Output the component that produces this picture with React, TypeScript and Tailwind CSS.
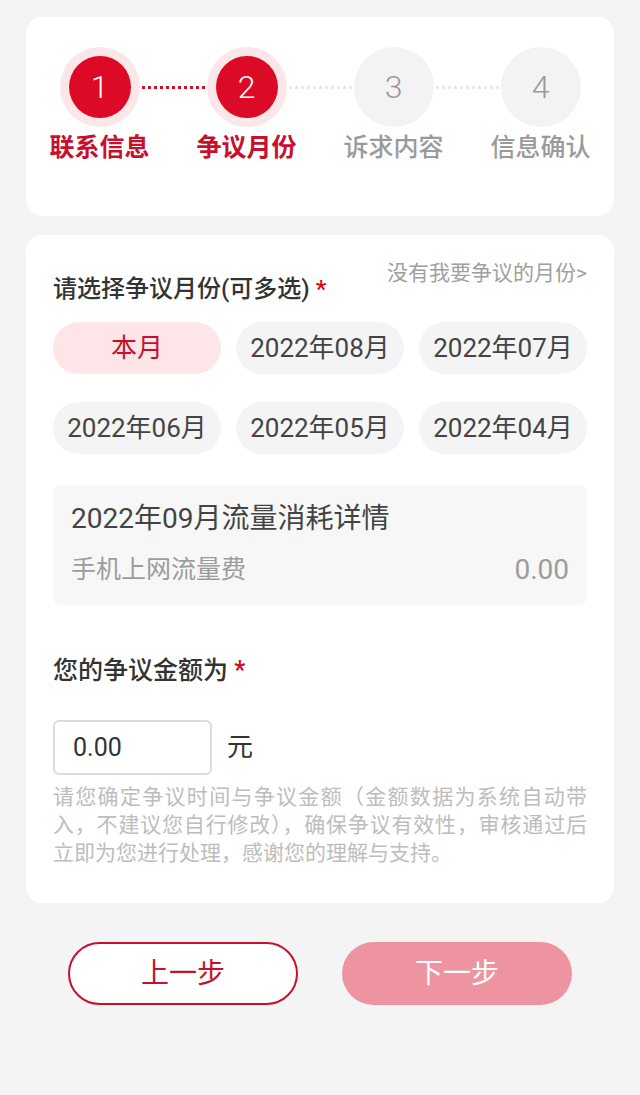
import React from "react";

const FONT = "font-['Roboto','Noto_Sans_CJK_SC',sans-serif]";

const steps = [
  { n: "1", label: "联系信息", state: "done" },
  { n: "2", label: "争议月份", state: "done" },
  { n: "3", label: "诉求内容", state: "todo" },
  { n: "4", label: "信息确认", state: "todo" },
];

const months = ["本月", "2022年08月", "2022年07月", "2022年06月", "2022年05月", "2022年04月"];

export default function App() {
  return (
    <div className={`min-h-[1095px] bg-[#f4f4f4] px-[26px] pt-[17px] ${FONT}`}>
      {/* Steps card */}
      <div className="h-[199px] rounded-[16px] bg-white grid grid-cols-4 pt-[30px]">
        {steps.map((s, i) => (
          <div key={s.n} className="relative flex flex-col items-center">
            {i < 3 && (
              <div
                className={`absolute top-[39px] left-[calc(50%+42px)] w-[63px] border-t-[3px] border-dotted ${
                  i === 0 ? "border-[#d2102c]" : "border-[#e8e8e8]"
                }`}
              />
            )}
            {s.state === "done" ? (
              <div className="w-[80px] h-[80px] rounded-full bg-[#fbe6e8] flex items-center justify-center">
                <div className="w-[62px] h-[62px] rounded-full bg-[#dc0a26] flex items-center justify-center text-white text-[32px] font-light leading-none">
                  {s.n}
                </div>
              </div>
            ) : (
              <div className="w-[80px] h-[80px] rounded-full bg-[#f3f3f3] flex items-center justify-center text-[#9a9a9a] text-[32px] font-light leading-none">
                {s.n}
              </div>
            )}
            <div
              className={`mt-[6px] text-[25px] leading-[30px] ${
                s.state === "done" ? "text-[#c8102e] font-bold" : "text-[#9a9a9a] font-medium"
              }`}
            >
              {s.label}
            </div>
          </div>
        ))}
      </div>

      {/* Main card */}
      <div className="mt-[19px] rounded-[16px] bg-white px-[27px] pt-[26px] pb-[36px]">
        <div className="flex justify-between items-start">
          <div className="mt-[13px] text-[24px] leading-[30px] text-[#333] font-medium">
            请选择争议月份(可多选) <span className="text-[#d9001b]">*</span>
          </div>
          <div className="text-[21px] leading-[24px] text-[#a0a0a0]">没有我要争议的月份&gt;</div>
        </div>

        <div className="mt-[18px] grid grid-cols-3 gap-x-[15px] gap-y-[28px]">
          {months.map((m, i) => (
            <div
              key={m}
              className={`h-[52px] rounded-full flex items-center justify-center text-[26px] ${
                i === 0 ? "bg-[#fde5e8] text-[#c8102e]" : "bg-[#f4f4f4] text-[#444]"
              }`}
            >
              {m}
            </div>
          ))}
        </div>

        <div className="mt-[31px] rounded-[8px] bg-[#f7f7f7] px-[18px] pt-[17px] pb-[19px]">
          <div className="text-[28px] leading-[34px] text-[#444]">2022年09月流量消耗详情</div>
          <div className="mt-[18px] flex justify-between items-center h-[32px] text-[#9c9c9c]">
            <span className="text-[25px]">手机上网流量费</span>
            <span className="text-[28px]">0.00</span>
          </div>
        </div>

        <div className="mt-[51px] text-[25px] leading-[30px] text-[#333] font-medium">
          您的争议金额为 <span className="text-[#d9001b]">*</span>
        </div>

        <div className="mt-[34px] flex items-center">
          <div className="w-[159px] h-[55px] rounded-[6px] border-2 border-[#dcdcdc] flex items-center pl-[18px] text-[25px] text-[#333]">
            0.00
          </div>
          <span className="ml-[15px] text-[26px] text-[#333]">元</span>
        </div>

        <div className="mt-[8px] text-[21px] leading-[28px] text-[#bdbdbd]">
          <div className="[text-align-last:justify] whitespace-nowrap">请您确定争议时间与争议金额（金额数据为系统自动带</div>
          <div className="[text-align-last:justify] whitespace-nowrap">入，不建议您自行修改），确保争议有效性，审核通过后</div>
          <div className="whitespace-nowrap">立即为您进行处理，感谢您的理解与支持。</div>
        </div>
      </div>

      {/* Buttons */}
      <div className="mt-[39px] flex justify-center gap-[44px]">
        <button className="w-[230px] h-[63px] rounded-full border-2 border-[#c8102e] bg-white text-[#c8102e] text-[28px]">
          上一步
        </button>
        <button className="w-[230px] h-[63px] rounded-full bg-[#ee94a0] text-white text-[28px]">
          下一步
        </button>
      </div>
    </div>
  );
}
